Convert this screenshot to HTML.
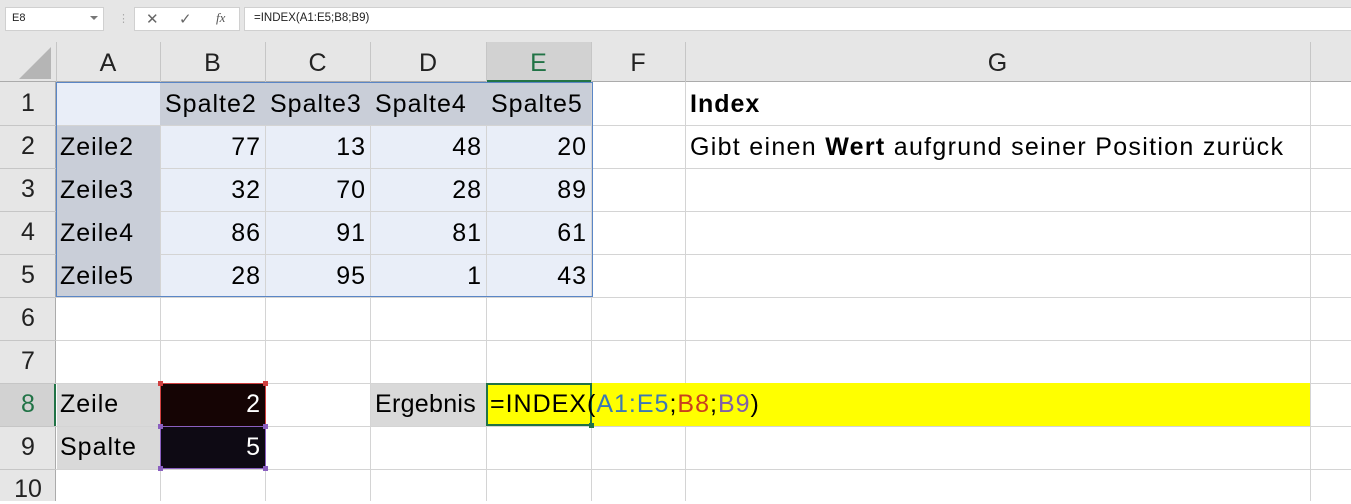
<!DOCTYPE html>
<html><head><meta charset="utf-8"><style>
*{margin:0;padding:0;box-sizing:border-box}
body{width:1351px;height:501px;overflow:hidden;background:#fff;position:relative;font-family:"Liberation Sans",Arial,sans-serif}
.a{position:absolute}
.t{position:absolute;font-size:25px;line-height:43px;color:#000;white-space:nowrap;letter-spacing:1px}
.r{text-align:right}
.vl{position:absolute;width:1px;background:#d4d4d4}
.hl{position:absolute;height:1px;background:#d4d4d4}
.hd{position:absolute;font-size:25px;color:#222;text-align:center}
</style></head><body>
<div class="a" style="left:0;top:0;width:1351px;height:42px;background:#e6e6e6"></div>
<div class="a" style="left:5px;top:7px;width:99px;height:24px;background:#fff;border:1px solid #d0d0d0"></div>
<div class="a" style="left:12px;top:12px;font-size:11px;color:#222">E8</div>
<div class="a" style="left:90px;top:16px;width:0;height:0;border-left:4px solid transparent;border-right:4px solid transparent;border-top:4px solid #777"></div>
<div class="a" style="left:118px;top:12px;font-size:11px;color:#aaa">⋮</div>
<div class="a" style="left:134px;top:7px;width:106px;height:24px;background:#fff;border:1px solid #d0d0d0"></div>
<div class="a" style="left:146px;top:10px;font-size:15px;color:#666">✕</div>
<div class="a" style="left:179px;top:10px;font-size:15px;color:#666">✓</div>
<div class="a" style="left:216px;top:10px;font-size:13px;color:#555;font-style:italic;font-family:'Liberation Serif',serif">fx</div>
<div class="a" style="left:244px;top:7px;width:1110px;height:24px;background:#fff;border:1px solid #d0d0d0"></div>
<div class="a" style="left:254px;top:12px;font-size:11.5px;color:#222">=INDEX(A1:E5;B8;B9)</div>
<div class="a" style="left:0;top:42px;width:1351px;height:40px;background:#e6e6e6;border-bottom:1px solid #ababab"></div>
<div class="a" style="left:19px;top:47px;width:0;height:0;border-left:32px solid transparent;border-bottom:32px solid #b5b5b5"></div>
<div class="a" style="left:486px;top:42px;width:105px;height:40px;background:#d2d2d2;border-bottom:2px solid #217346"></div>
<div class="a" style="left:0;top:82px;width:56px;height:419px;background:#e6e6e6;border-right:1px solid #ababab"></div>
<div class="a" style="left:0;top:383px;width:56px;height:43px;background:#d2d2d2;border-right:2px solid #217346"></div>
<div class="vl" style="left:56px;top:42px;height:40px;background:#c6c6c6"></div>
<div class="vl" style="left:160px;top:42px;height:40px;background:#c6c6c6"></div>
<div class="vl" style="left:265px;top:42px;height:40px;background:#c6c6c6"></div>
<div class="vl" style="left:370px;top:42px;height:40px;background:#c6c6c6"></div>
<div class="vl" style="left:486px;top:42px;height:40px;background:#c6c6c6"></div>
<div class="vl" style="left:591px;top:42px;height:40px;background:#c6c6c6"></div>
<div class="vl" style="left:685px;top:42px;height:40px;background:#c6c6c6"></div>
<div class="vl" style="left:1310px;top:42px;height:40px;background:#c6c6c6"></div>
<div class="hd" style="left:56px;top:49px;width:104px">A</div>
<div class="hd" style="left:160px;top:49px;width:105px">B</div>
<div class="hd" style="left:265px;top:49px;width:105px">C</div>
<div class="hd" style="left:370px;top:49px;width:116px">D</div>
<div class="hd" style="left:486px;top:49px;width:105px;color:#217346">E</div>
<div class="hd" style="left:591px;top:49px;width:94px">F</div>
<div class="hd" style="left:685px;top:49px;width:625px">G</div>
<div class="hl" style="left:0;top:125px;width:56px;background:#c6c6c6"></div>
<div class="hl" style="left:0;top:168px;width:56px;background:#c6c6c6"></div>
<div class="hl" style="left:0;top:211px;width:56px;background:#c6c6c6"></div>
<div class="hl" style="left:0;top:254px;width:56px;background:#c6c6c6"></div>
<div class="hl" style="left:0;top:297px;width:56px;background:#c6c6c6"></div>
<div class="hl" style="left:0;top:340px;width:56px;background:#c6c6c6"></div>
<div class="hl" style="left:0;top:383px;width:56px;background:#c6c6c6"></div>
<div class="hl" style="left:0;top:426px;width:56px;background:#c6c6c6"></div>
<div class="hl" style="left:0;top:469px;width:56px;background:#c6c6c6"></div>
<div class="hd" style="left:0;top:89px;width:56px">1</div>
<div class="hd" style="left:0;top:132px;width:56px">2</div>
<div class="hd" style="left:0;top:175px;width:56px">3</div>
<div class="hd" style="left:0;top:218px;width:56px">4</div>
<div class="hd" style="left:0;top:261px;width:56px">5</div>
<div class="hd" style="left:0;top:304px;width:56px">6</div>
<div class="hd" style="left:0;top:347px;width:56px">7</div>
<div class="hd" style="left:0;top:390px;width:56px;color:#217346">8</div>
<div class="hd" style="left:0;top:433px;width:56px">9</div>
<div class="hd" style="left:0;top:475px;width:56px">10</div>
<div class="vl" style="left:160px;top:82px;height:419px"></div>
<div class="vl" style="left:265px;top:82px;height:419px"></div>
<div class="vl" style="left:370px;top:82px;height:419px"></div>
<div class="vl" style="left:486px;top:82px;height:419px"></div>
<div class="vl" style="left:591px;top:82px;height:419px"></div>
<div class="vl" style="left:685px;top:82px;height:419px"></div>
<div class="vl" style="left:1310px;top:82px;height:419px"></div>
<div class="hl" style="left:56px;top:125px;width:1295px"></div>
<div class="hl" style="left:56px;top:168px;width:1295px"></div>
<div class="hl" style="left:56px;top:211px;width:1295px"></div>
<div class="hl" style="left:56px;top:254px;width:1295px"></div>
<div class="hl" style="left:56px;top:297px;width:1295px"></div>
<div class="hl" style="left:56px;top:340px;width:1295px"></div>
<div class="hl" style="left:56px;top:383px;width:1295px"></div>
<div class="hl" style="left:56px;top:426px;width:1295px"></div>
<div class="hl" style="left:56px;top:469px;width:1295px"></div>
<div class="a" style="left:57px;top:83px;width:103px;height:42px;background:#e9eef8"></div>
<div class="a" style="left:160px;top:83px;width:431px;height:42px;background:#c9ced8"></div>
<div class="a" style="left:57px;top:126px;width:103px;height:171px;background:#c9ced8"></div>
<div class="a" style="left:161px;top:126px;width:430px;height:171px;background:#e9eef8"></div>
<div class="hl" style="left:161px;top:168px;width:430px"></div>
<div class="hl" style="left:161px;top:211px;width:430px"></div>
<div class="hl" style="left:161px;top:254px;width:430px"></div>
<div class="vl" style="left:265px;top:126px;height:171px"></div>
<div class="vl" style="left:370px;top:126px;height:171px"></div>
<div class="vl" style="left:486px;top:126px;height:171px"></div>
<div class="a" style="left:56px;top:82px;width:537px;height:215px;border:1.5px solid #5a86c6"></div>
<div class="t" style="left:165px;top:83px">Spalte2</div>
<div class="t" style="left:270px;top:83px">Spalte3</div>
<div class="t" style="left:375px;top:83px">Spalte4</div>
<div class="t" style="left:491px;top:83px">Spalte5</div>
<div class="t" style="left:60px;top:126px">Zeile2</div>
<div class="t" style="left:60px;top:169px">Zeile3</div>
<div class="t" style="left:60px;top:212px">Zeile4</div>
<div class="t" style="left:60px;top:255px">Zeile5</div>
<div class="t r" style="left:160px;width:101px;top:126px">77</div>
<div class="t r" style="left:265px;width:101px;top:126px">13</div>
<div class="t r" style="left:370px;width:112px;top:126px">48</div>
<div class="t r" style="left:486px;width:101px;top:126px">20</div>
<div class="t r" style="left:160px;width:101px;top:169px">32</div>
<div class="t r" style="left:265px;width:101px;top:169px">70</div>
<div class="t r" style="left:370px;width:112px;top:169px">28</div>
<div class="t r" style="left:486px;width:101px;top:169px">89</div>
<div class="t r" style="left:160px;width:101px;top:212px">86</div>
<div class="t r" style="left:265px;width:101px;top:212px">91</div>
<div class="t r" style="left:370px;width:112px;top:212px">81</div>
<div class="t r" style="left:486px;width:101px;top:212px">61</div>
<div class="t r" style="left:160px;width:101px;top:255px">28</div>
<div class="t r" style="left:265px;width:101px;top:255px">95</div>
<div class="t r" style="left:370px;width:112px;top:255px">1</div>
<div class="t r" style="left:486px;width:101px;top:255px">43</div>
<div class="t" style="left:690px;top:83px;font-weight:bold">Index</div>
<div class="t" style="left:690px;top:126px;letter-spacing:1.3px">Gibt einen <b>Wert</b> aufgrund seiner Position zurück</div>
<div class="a" style="left:57px;top:384px;width:103px;height:85px;background:#d9d9d9"></div>
<div class="hl" style="left:57px;top:426px;width:103px"></div>
<div class="t" style="left:60px;top:383px">Zeile</div>
<div class="t" style="left:60px;top:426px">Spalte</div>
<div class="a" style="left:160px;top:383px;width:106px;height:44px;background:#150404;border:1.5px solid #d04040"></div>
<div class="a" style="left:160px;top:426px;width:106px;height:43px;background:#0e0a14;border:1.5px solid #8a5fc0"></div>
<div class="t r" style="left:160px;width:101px;top:383px;color:#fff">2</div>
<div class="t r" style="left:160px;width:101px;top:426px;color:#fff">5</div>
<div class="a" style="left:158px;top:381px;width:5px;height:5px;background:#d04040"></div>
<div class="a" style="left:263px;top:381px;width:5px;height:5px;background:#d04040"></div>
<div class="a" style="left:158px;top:424px;width:5px;height:5px;background:#8a5fc0"></div>
<div class="a" style="left:263px;top:424px;width:5px;height:5px;background:#8a5fc0"></div>
<div class="a" style="left:158px;top:466px;width:5px;height:5px;background:#8a5fc0"></div>
<div class="a" style="left:263px;top:466px;width:5px;height:5px;background:#8a5fc0"></div>
<div class="a" style="left:371px;top:384px;width:115px;height:42px;background:#d9d9d9"></div>
<div class="t" style="left:375px;top:383px;letter-spacing:0.3px">Ergebnis</div>
<div class="a" style="left:486px;top:383px;width:824px;height:43px;background:#ffff00"></div>
<div class="a" style="left:486px;top:383px;width:106px;height:43px;border:2px solid #217346"></div>
<div class="a" style="left:589px;top:423px;width:5px;height:5px;background:#217346"></div>
<div class="t" style="left:490px;top:383px">=INDEX(<span style="color:#3b78b5">A1:E5</span>;<span style="color:#c8401e">B8</span>;<span style="color:#8060a8">B9</span>)</div>
</body></html>
